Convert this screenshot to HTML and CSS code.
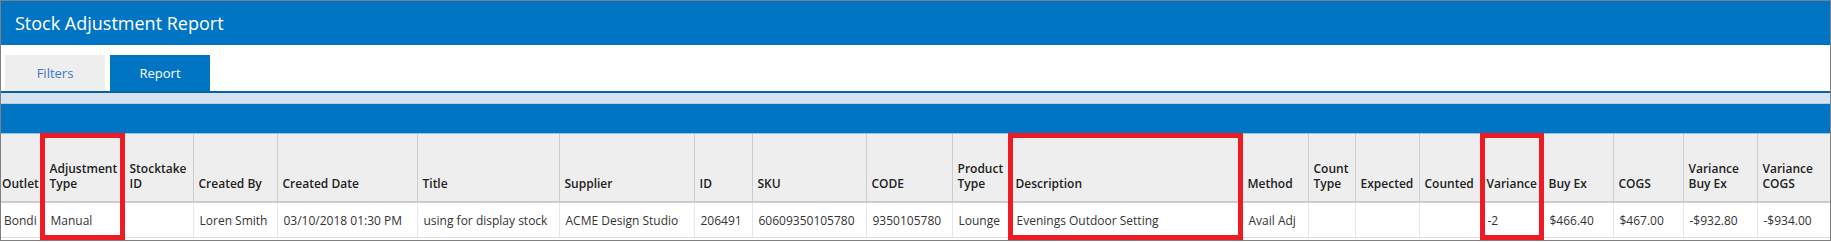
FILE: index.html
```html
<!DOCTYPE html>
<html lang="en">

<head>
    <meta charset="UTF-8">
    <title>Stock Adjustment Report</title>
    <link rel="stylesheet" href="styles.css">
</head>

<body>
    <div class="frame">
        <div class="page-title">Stock Adjustment Report</div>

        <div class="tabs">
            <div class="tab">Filters</div>
            <div class="tab active">Report</div>
        </div>
        <div class="tab-line"></div>
        <div class="strip"></div>
        <div class="report-bar"></div>

        <table class="report">
            <colgroup>
                <col style="width:43px">
                <col style="width:80px">
                <col style="width:69px">
                <col style="width:84px">
                <col style="width:140px">
                <col style="width:142px">
                <col style="width:135px">
                <col style="width:58px">
                <col style="width:114px">
                <col style="width:86px">
                <col style="width:58px">
                <col style="width:232px">
                <col style="width:66px">
                <col style="width:47px">
                <col style="width:64px">
                <col style="width:62px">
                <col style="width:62px">
                <col style="width:70px">
                <col style="width:70px">
                <col style="width:74px">
                <col style="width:73px">
            </colgroup>
            <thead>
                <tr>
                    <th>Outlet</th>
                    <th>Adjustment Type</th>
                    <th>Stocktake ID</th>
                    <th>Created By</th>
                    <th>Created Date</th>
                    <th>Title</th>
                    <th>Supplier</th>
                    <th>ID</th>
                    <th>SKU</th>
                    <th>CODE</th>
                    <th>Product Type</th>
                    <th>Description</th>
                    <th>Method</th>
                    <th>Count Type</th>
                    <th>Expected</th>
                    <th>Counted</th>
                    <th>Variance</th>
                    <th>Buy Ex</th>
                    <th>COGS</th>
                    <th>Variance Buy Ex</th>
                    <th>Variance COGS</th>
                </tr>
            </thead>
            <tbody>
                <tr>
                    <td>Bondi</td>
                    <td>Manual</td>
                    <td></td>
                    <td>Loren Smith</td>
                    <td>03/10/2018 01:30 PM</td>
                    <td>using for display stock</td>
                    <td>ACME Design Studio</td>
                    <td>206491</td>
                    <td>60609350105780</td>
                    <td>9350105780</td>
                    <td>Lounge</td>
                    <td>Evenings Outdoor Setting</td>
                    <td>Avail Adj</td>
                    <td></td>
                    <td></td>
                    <td></td>
                    <td>-2</td>
                    <td>$466.40</td>
                    <td>$467.00</td>
                    <td>-$932.80</td>
                    <td>-$934.00</td>
                </tr>
            </tbody>
        </table>

        <!-- highlight boxes drawn over the table -->
        <div class="mark mark-type"></div>
        <div class="mark mark-desc"></div>
        <div class="mark mark-variance"></div>
    </div>
</body>

</html>
```

FILE: styles.css
```css
body {
    margin: 0;
    font-family: "Segoe UI", "Open Sans", sans-serif;
    background-color: #fff;
}

.frame {
    position: relative;
    width: 1829px;
    height: 239px;
    border: 1px solid #808080;
    overflow: hidden;
}

.page-title {
    height: 44px;
    line-height: 44px;
    padding-left: 14px;
    background-color: #0274c4;
    color: #fff;
    font-size: 18px;
}

.tabs {
    display: flex;
    gap: 5px;
    height: 36px;
    padding: 10px 0 0 4px;
}

.tab {
    width: 100px;
    line-height: 36px;
    text-align: center;
    font-size: 13px;
    background-color: #eeeeee;
    color: #3a78c0;
}

.tab.active {
    background-color: #0274c4;
    color: #fff;
}

.tab-line {
    height: 2px;
    background-color: #0461a6;
}

.strip {
    height: 10px;
    background-color: #d7e1ef;
    border-bottom: 1px solid #b3cde6;
}

.report-bar {
    height: 29px;
    background-color: #0274c4;
    border-bottom: 1px solid #93c3e8;
}

/* report table */
.report {
    width: 1829px;
    table-layout: fixed;
    border-collapse: collapse;
    font-size: 12px;
    color: #333;
}

.report th {
    height: 57px;
    padding: 0 4px 10px 5px;
    vertical-align: bottom;
    text-align: left;
    font-weight: 600;
    line-height: 15px;
    color: #222;
    background-color: #eeeeee;
    border-right: 1px solid #cccccc;
    border-bottom: 2px solid #cccccc;
}

.report td {
    height: 34px;
    padding: 0 4px 0 6px;
    white-space: nowrap;
    border-right: 1px solid #e6e6f2;
    border-bottom: 1px solid #dddddd;
}

.report th:first-child {
    padding-left: 1px;
    padding-right: 0;
}

.report td:first-child {
    padding-left: 3px;
    padding-right: 0;
}

.report th:last-child,
.report td:last-child {
    border-right: none;
}

/* red highlight boxes */
.mark {
    position: absolute;
    top: 132px;
    height: 97px;
    border: 5px solid #ed1c24;
}

.mark-type {
    left: 39px;
    width: 75px;
}

.mark-desc {
    left: 1007px;
    width: 225px;
}

.mark-variance {
    left: 1479px;
    width: 54px;
}
```
